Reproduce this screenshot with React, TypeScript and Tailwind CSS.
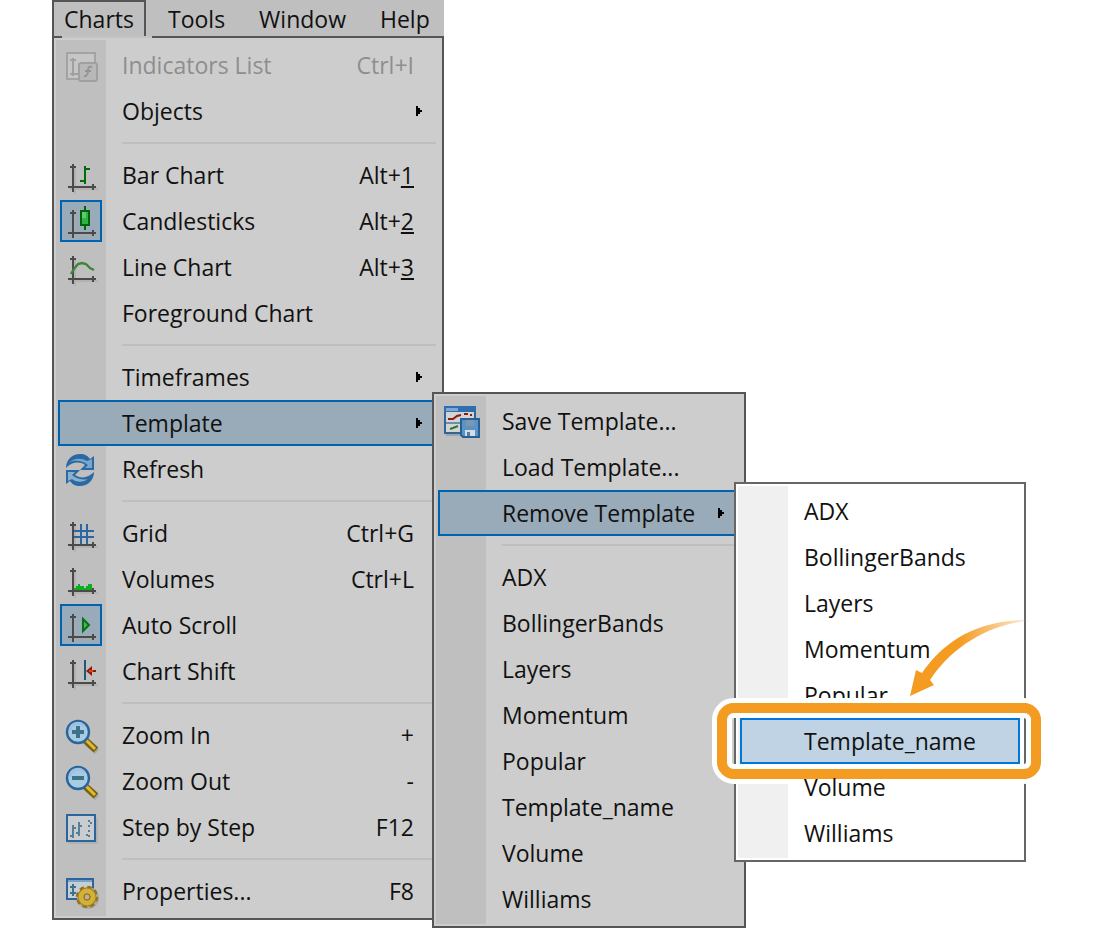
import React from 'react';
import clsx from 'clsx';

type Item = {
  label: string;
  icon?: React.ReactNode;
  shortcut?: React.ReactNode;
  disabled?: boolean;
  checked?: boolean;
  marked?: boolean;
  submenu?: boolean;
  children?: React.ReactNode;
};

const Icon = ({ children }: { children: React.ReactNode }) => (
  <svg className="h-full w-full" viewBox="0 0 42 42" fill="none" aria-hidden="true">
    {children}
  </svg>
);

const Axes = ({ children }: { children: React.ReactNode }) => (
  <Icon>
    <g stroke="#aaaaaa" strokeWidth={2} opacity={0.6}>
      <path d="M15 12V40M10 35H38" />
    </g>
    <path d="M13 10V38M10 13H16M8 33H36M33 30V36" stroke="#4a4a4a" strokeWidth={2} />
    {children}
  </Icon>
);

const BarIcon = () => (
  <Axes>
    <path d="M25 12V30M25 15H30M20 27H25" stroke="#006b0a" strokeWidth={2} />
  </Axes>
);

const CandleIcon = () => (
  <Axes>
    <path d="M25 6V30" stroke="#00650a" strokeWidth={2} />
    <rect x={21} y={11} width={8} height={14} fill="#2fb246" stroke="#00650a" strokeWidth={2} />
    <path d="M22 12h4v6h-4z" fill="#63c774" />
  </Axes>
);

const LineIcon = () => (
  <Axes>
    <path d="M11 28L14 23L18 18L22 17L26 18L30 22L34 24" stroke="#3d853d" strokeWidth={2.4} />
  </Axes>
);

const GridIcon = () => (
  <Axes>
    <path d="M21 12V32M27 12V32M14 19H34M14 25H34" stroke="#2c66a0" strokeWidth={2} />
  </Axes>
);

const VolumesIcon = () => (
  <Axes>
    <path d="M14 32V30h2v-2h2v-2h2v2h4v2h2v-2h2v-2h4v6z" fill="#0cae1c" />
  </Axes>
);

const ScrollIcon = () => (
  <Axes>
    <path d="M23 15V27L29 21Z" fill="#43b95a" stroke="#087114" strokeWidth={2} />
  </Axes>
);

const ShiftIcon = () => (
  <Axes>
    <path d="M25 10V30" stroke="#1f5878" strokeWidth={2} />
    <path d="M26 21L32 16V20H36V22H32V26Z" fill="#8c1a04" />
    <path d="M29 21H33" stroke="#d54a1c" strokeWidth={2} />
  </Axes>
);

const RefreshIcon = () => (
  <Icon>
    <path d="M6 20C6 12 12 6 20 6C25 6 28 8 30 11L34 8V22H20L25 17C19 13 12 14 6 20Z" fill="#2b69a4" />
    <path d="M10 14C13 11 20 9 27 13L32 11V20H25L28 17C22 12 15 12 10 14Z" fill="#7ba6c9" />
    <path d="M34 24C34 32 28 38 20 38C15 38 12 36 10 33L6 36V22H20L15 27C21 31 28 30 34 24Z" fill="#2b69a4" />
    <path d="M28 31C24 34 17 35 12 31L8 33V24H15L12 27C18 32 24 32 28 31Z" fill="#8cb0cc" />
  </Icon>
);

const ZoomIcon = ({ plus }: { plus?: boolean }) => (
  <Icon>
    <path d="M27 29L37 38" stroke="#a9a9a9" strokeWidth={6} />
    <path d="M25 26L36 36" stroke="#80600c" strokeWidth={7} />
    <path d="M26 26L35 35" stroke="#d9bd3b" strokeWidth={3} />
    <circle cx={18} cy={18} r={11} fill="#a9cbdf" stroke="#28659d" strokeWidth={2.4} />
    <path d="M10 17a8 8 0 0 1 14-5" stroke="#9fc0e0" strokeWidth={3} />
    <path d={plus ? 'M12 18H24M18 12V24' : 'M12 18H24'} stroke="#3b738c" strokeWidth={4} />
  </Icon>
);

const StepIcon = () => (
  <Icon>
    <path d="M8 37H37V12" stroke="#aaaaaa" strokeWidth={2} opacity={0.6} />
    <rect x={7} y={9} width={28} height={26} fill="#c9cdcf" stroke="#2c659b" strokeWidth={2} />
    <path d="M13 19V32M10 30H13M13 22H16M19 16V30M16 27H19M19 20H22" stroke="#567f96" strokeWidth={2} />
    <path d="M29 14V32" stroke="#567f96" strokeWidth={2} strokeDasharray="2 3" />
    <path d="M31 16V18M27 28V30" stroke="#567f96" strokeWidth={2} />
  </Icon>
);

const PropertiesIcon = () => (
  <Icon>
    <path d="M7 9H33V29H7Z" fill="#c7ced3" stroke="#2c659b" strokeWidth={2} />
    <path d="M8 11H32" stroke="#7ba2c4" strokeWidth={2} />
    <path d="M13 14V26M10 17H16M10 23H16" stroke="#3e6f8e" strokeWidth={2} />
    <circle cx={28} cy={28} r={9} stroke="#a9a9a9" strokeWidth={4} />
    <circle cx={27} cy={27} r={9.5} stroke="#94731a" strokeWidth={3.5} strokeDasharray="4.2 3.26" />
    <circle cx={27} cy={27} r={6} stroke="#a07c18" strokeWidth={7} />
    <circle cx={27} cy={27} r={6} stroke="#d1b13a" strokeWidth={5} />
    <circle cx={27} cy={27} r={3} fill="#b9b29a" stroke="#8f6c10" strokeWidth={1} />
  </Icon>
);

const IndicatorsIcon = () => (
  <Icon>
    <path d="M7 9H35V35H7Z" fill="#c6c6c6" stroke="#a3a3a3" strokeWidth={2} />
    <path d="M13 14V32M10 16H16M10 30H18" stroke="#a0a0a0" strokeWidth={2} />
    <rect x={19} y={19} width={18} height={18} rx={2} fill="#b8b8b8" stroke="#a0a0a0" strokeWidth={2} />
    <path d="M32 23C28 22 28 25 28 27S27 33 24 32M25 27H31" stroke="#949494" strokeWidth={2} />
  </Icon>
);

const SaveIcon = () => (
  <Icon>
    <path d="M6 35H20" stroke="#a4a4a4" strokeWidth={2} />
    <path d="M5 7H35V33H5Z" fill="#d2d4d5" stroke="#2f659b" strokeWidth={2} />
    <path d="M4 6H36V12H4Z" fill="#2f6faf" />
    <path d="M6 8H18V11H6Z" fill="#7ea8cf" />
    <path d="M8 19H13L17 16L21 15M24 14H28M30 15H32" stroke="#8a1c08" strokeWidth={2} />
    <path d="M6 23H20" stroke="#6f8fa8" strokeWidth={2} />
    <path d="M10 29L13 28L18 26" stroke="#2b7a2b" strokeWidth={2} />
    <path d="M21 19H39V37H23L21 35Z" fill="#5c92c4" stroke="#275f97" strokeWidth={2} />
    <path d="M26 20H34V26H26Z" fill="#7d98ac" />
    <path d="M25 30H35V36H25Z" fill="#d6dde2" />
    <path d="M27 32H30V36H27Z" fill="#4a7fb0" />
  </Icon>
);

// tapering arrow and rounded frame around the entry to click
const Callout = () => (
  <>
    <span className="pointer-events-none absolute -inset-y-5 -left-7 -right-[26px] rounded-[22px] border-[5px] border-white">
      <span className="block h-full rounded-[17px] border-10 border-[#f49b22]">
        <span className="block h-full rounded-[7px] border-[5px] border-white" />
      </span>
    </span>
    <svg
      className="pointer-events-none absolute -top-[106px] left-40 h-[90px] w-[140px]"
      viewBox="0 0 140 90"
      aria-hidden="true"
    >
      <defs>
        <linearGradient id="swoosh" x1="0" y1="0" x2="1" y2="0">
          <stop offset="0.4" stopColor="#f49b22" />
          <stop offset="1" stopColor="#f49b22" stopOpacity="0.15" />
        </linearGradient>
      </defs>
      <path
        d="M10 84L16 58L22 61C42 32 74 7 132 8C84 13 50 38 30 68L34 73Z"
        fill="url(#swoosh)"
      />
    </svg>
  </>
);

const MenuItem = ({ item, light }: { item: Item; light?: boolean }) => {
  const open = Boolean(item.children);
  return (
    <li className="relative" role="none">
      <button
        type="button"
        role={item.checked ? 'menuitemcheckbox' : 'menuitem'}
        aria-checked={item.checked}
        aria-haspopup={item.submenu ? 'menu' : undefined}
        disabled={item.disabled}
        className={clsx(
          'flex h-[46px] w-full items-center border-2 text-left whitespace-nowrap',
          open && 'border-[#0063af] bg-[#99aab8]',
          item.marked && 'border-[#0078d7] bg-[#bfd3e4]',
          !open && !item.marked && 'border-transparent',
          !open && !item.marked && (light ? 'hover:bg-[#bfd3e4]' : 'hover:bg-[#99aab8]'),
          item.disabled ? 'text-[#8e8e8e]' : 'text-[#111]'
        )}
      >
        <span
          className={clsx(
            'mr-5 size-[42px] shrink-0',
            item.checked && 'bg-[#99aab8] outline-2 -outline-offset-2 outline-[#0063af]'
          )}
        >
          {item.icon}
        </span>
        <span className="flex-1">{item.label}</span>
        {item.shortcut && <span className="pr-[22px]">{item.shortcut}</span>}
        {item.submenu && (
          <svg className="mr-3.5 h-2.5 w-1.5" viewBox="0 0 6 10" aria-hidden="true">
            <path d="M0 0H2V2H4V4H6V6H4V8H2V10H0Z" fill="#000" />
          </svg>
        )}
      </button>
      {item.children && <div className="absolute left-full -top-2 -ml-1.5 z-10">{item.children}</div>}
      {item.marked && <Callout />}
    </li>
  );
};

const Menu = ({ groups, width, label, light }: { groups: Item[][]; width: string; label: string; light?: boolean }) => (
  <ul
    role="menu"
    aria-label={label}
    className={clsx(
      'border-2 p-1 bg-no-repeat bg-[length:50px_calc(100%-4px)] bg-[position:2px_2px]',
      width,
      light
        ? 'border-[#666] bg-white bg-[linear-gradient(#f0f0f0,#f0f0f0)]'
        : 'border-[#555] bg-[#cdcdcd] bg-[linear-gradient(#bfbfbf,#bfbfbf)]'
    )}
  >
    {groups.map((group, g) => (
      <React.Fragment key={g}>
        {g > 0 && <li role="separator" className="my-2 mr-0.5 ml-16 h-0.5 bg-[#bebebe]" />}
        {group.map((item) => (
          <MenuItem key={item.label} item={item} light={light} />
        ))}
      </React.Fragment>
    ))}
  </ul>
);

const templates = ['ADX', 'BollingerBands', 'Layers', 'Momentum', 'Popular', 'Template_name', 'Volume', 'Williams'];

const removeGroups: Item[][] = [templates.map((t) => ({ label: t, marked: t === 'Template_name' }))];

const templateGroups: Item[][] = [
  [
    { label: 'Save Template...', icon: <SaveIcon /> },
    { label: 'Load Template...' },
    {
      label: 'Remove Template',
      submenu: true,
      children: <Menu groups={removeGroups} width="w-[292px]" label="Remove Template" light />,
    },
  ],
  templates.map((t) => ({ label: t })),
];

const chartGroups: Item[][] = [
  [
    { label: 'Indicators List', icon: <IndicatorsIcon />, shortcut: 'Ctrl+I', disabled: true },
    { label: 'Objects', submenu: true },
  ],
  [
    { label: 'Bar Chart', icon: <BarIcon />, shortcut: <>Alt+<u>1</u></> },
    { label: 'Candlesticks', icon: <CandleIcon />, shortcut: <>Alt+<u>2</u></>, checked: true },
    { label: 'Line Chart', icon: <LineIcon />, shortcut: <>Alt+<u>3</u></> },
    { label: 'Foreground Chart' },
  ],
  [
    { label: 'Timeframes', submenu: true },
    {
      label: 'Template',
      submenu: true,
      children: <Menu groups={templateGroups} width="w-[314px]" label="Template" />,
    },
    { label: 'Refresh', icon: <RefreshIcon /> },
  ],
  [
    { label: 'Grid', icon: <GridIcon />, shortcut: 'Ctrl+G' },
    { label: 'Volumes', icon: <VolumesIcon />, shortcut: 'Ctrl+L' },
    { label: 'Auto Scroll', icon: <ScrollIcon />, checked: true },
    { label: 'Chart Shift', icon: <ShiftIcon /> },
  ],
  [
    { label: 'Zoom In', icon: <ZoomIcon plus />, shortcut: '+' },
    { label: 'Zoom Out', icon: <ZoomIcon />, shortcut: '-' },
    { label: 'Step by Step', icon: <StepIcon />, shortcut: 'F12' },
  ],
  [{ label: 'Properties...', icon: <PropertiesIcon />, shortcut: 'F8' }],
];

export default function App() {
  return (
    <main className="min-h-screen bg-white pl-[52px] font-['Open_Sans','Noto_Sans',sans-serif] text-[23px] leading-8 text-[#111]">
      <div className="w-[392px]">
        <nav className="flex h-9 items-stretch bg-[#bfbfbf]">
          <button type="button" className="w-[94px] border-2 border-b-0 border-[#555]">
            Charts
          </button>
          <div className="ml-[22px] flex gap-[34px] pt-0.5">
            <button type="button">Tools</button>
            <button type="button">Window</button>
            <button type="button">Help</button>
          </div>
        </nav>
        <div className="relative">
          <Menu groups={chartGroups} width="w-full" label="Charts" />
          {/* opening under the active tab */}
          <span className="absolute top-0 left-2.5 h-0.5 w-[90px] bg-[#c2c2c2]" />
        </div>
      </div>
    </main>
  );
}
